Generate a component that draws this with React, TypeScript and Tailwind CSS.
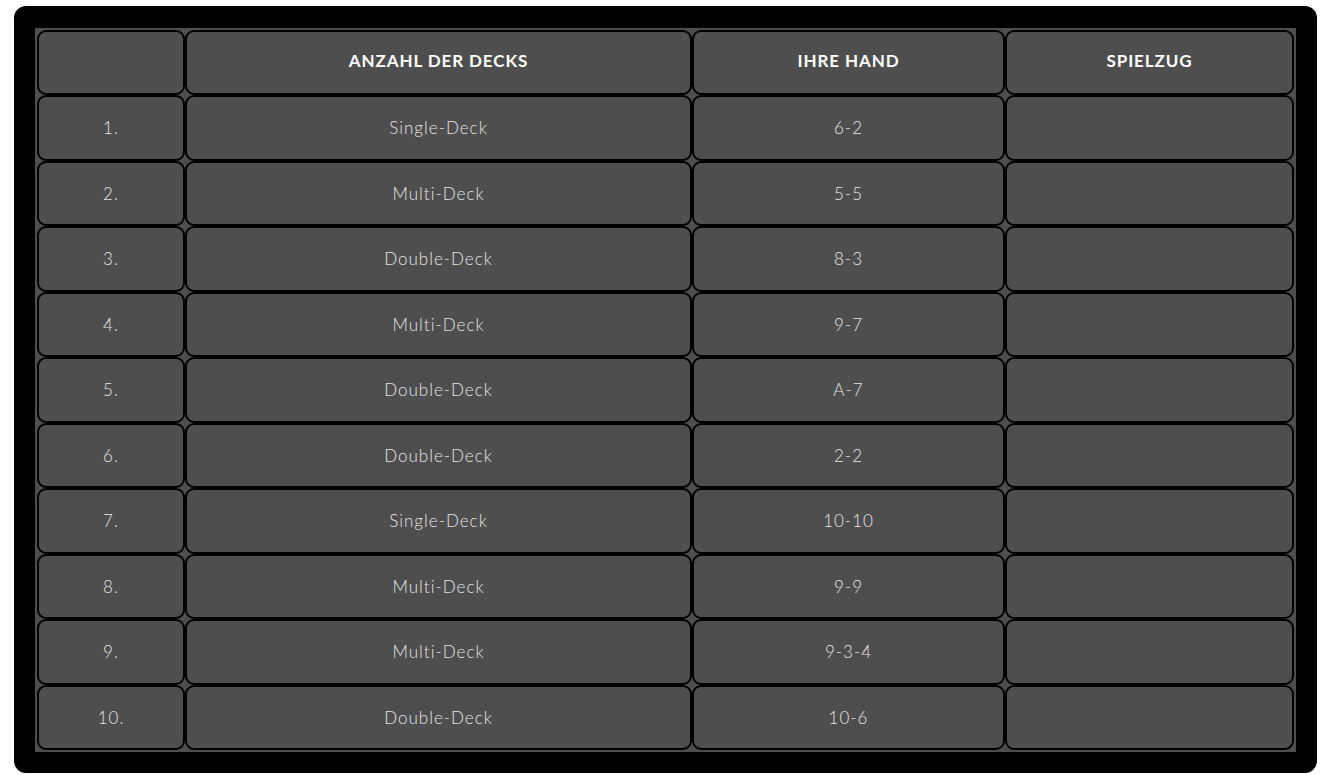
import React from "react";

const rows: [string, string][] = [
  ["Single-Deck", "6-2"],
  ["Multi-Deck", "5-5"],
  ["Double-Deck", "8-3"],
  ["Multi-Deck", "9-7"],
  ["Double-Deck", "A-7"],
  ["Double-Deck", "2-2"],
  ["Single-Deck", "10-10"],
  ["Multi-Deck", "9-9"],
  ["Multi-Deck", "9-3-4"],
  ["Double-Deck", "10-6"],
];

const cell =
  "flex items-center justify-center rounded-[9px] border-2 border-black bg-[#4e4e4e]";
const head = "pb-[4px] text-[17px] font-bold tracking-[0.9px] text-white";
const body = "text-[17px] font-light tracking-[1px] text-[#e4e4e4]";

export default function App() {
  return (
    <div className="bg-white px-[14px] pt-[6px] pb-[2px] font-['Lato',sans-serif]">
      <div className="rounded-[12px] bg-black pl-[21px] pr-[21px] pt-[22px] pb-[21px]">
        <div className="grid h-[724px] grid-cols-[148px_507px_313px_289px] grid-rows-11 bg-[#4e4e4e] p-[2px]">
          <div className={cell} />
          <div className={`${cell} ${head}`}>ANZAHL DER DECKS</div>
          <div className={`${cell} ${head}`}>IHRE HAND</div>
          <div className={`${cell} ${head}`}>SPIELZUG</div>
          {rows.map(([deck, hand], idx) => (
            <React.Fragment key={idx}>
              <div className={`${cell} ${body}`}>{idx + 1}.</div>
              <div className={`${cell} ${body}`}>{deck}</div>
              <div className={`${cell} ${body}`}>{hand}</div>
              <div className={cell} />
            </React.Fragment>
          ))}
        </div>
      </div>
    </div>
  );
}
